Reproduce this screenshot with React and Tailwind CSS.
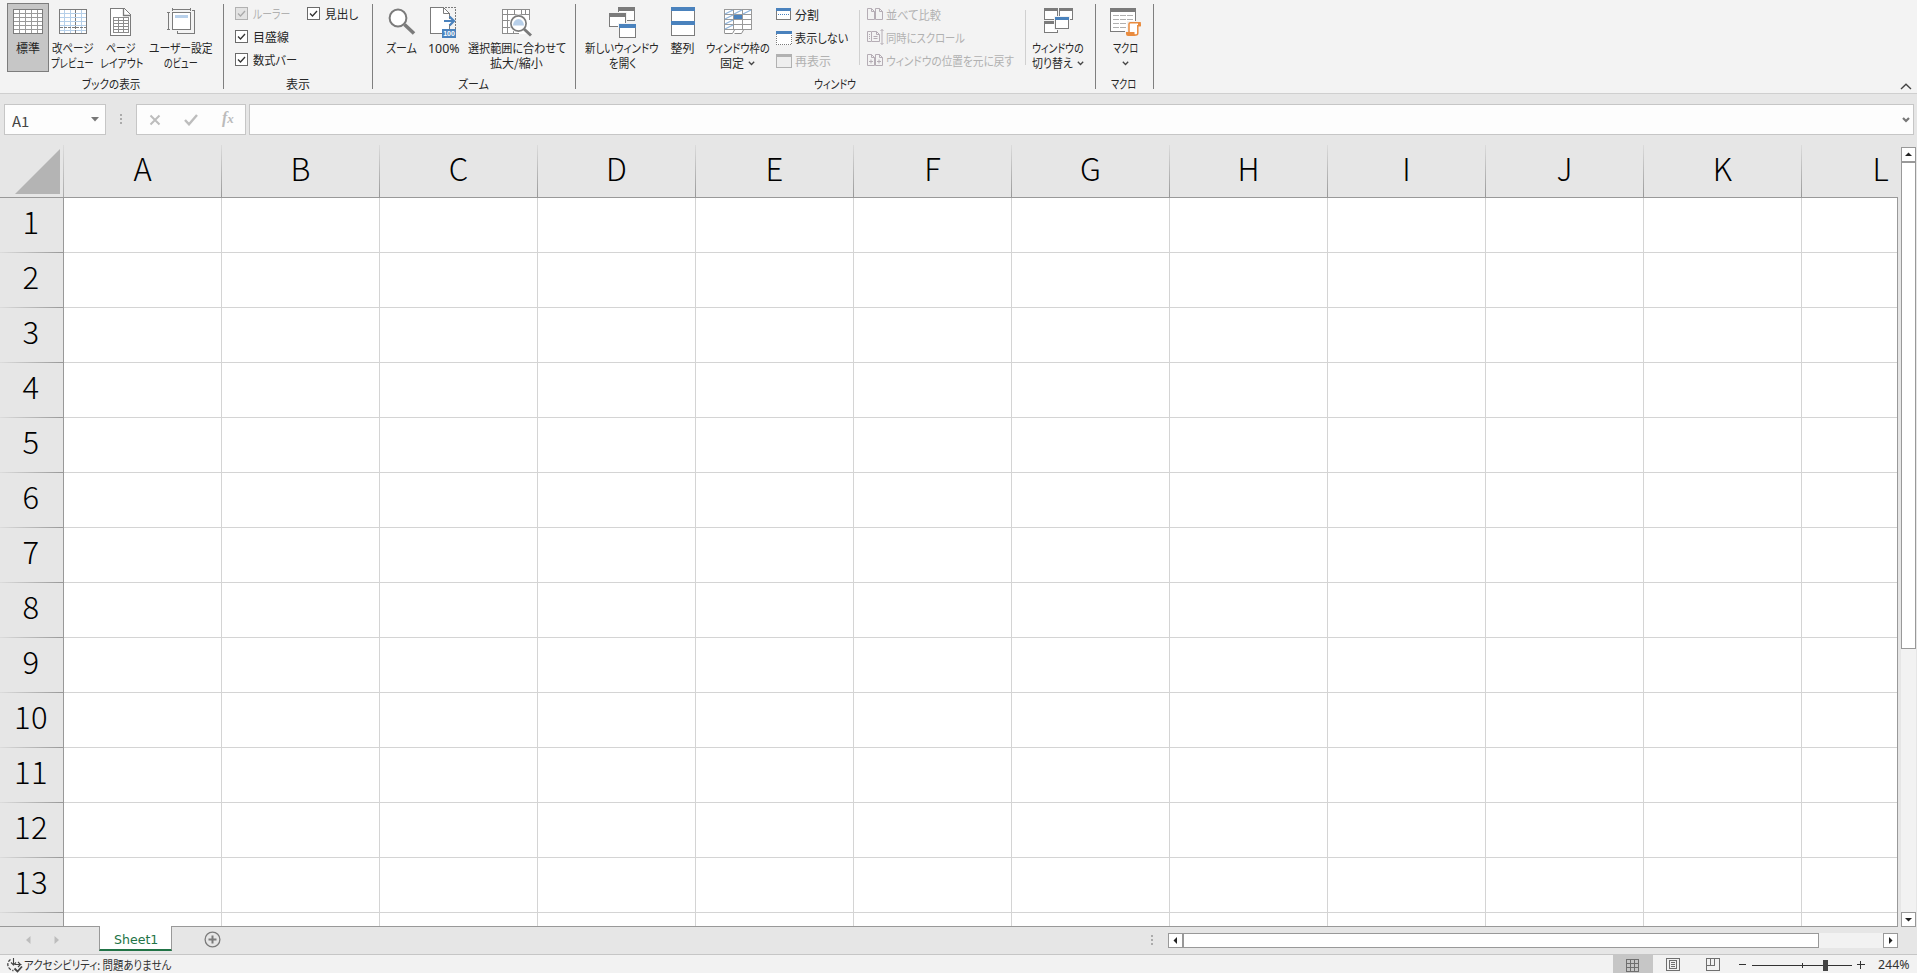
import { useLayoutEffect, useRef, useState } from "react";

/* Text squeezed or stretched horizontally to a given width, like the condensed UI kana. */
function Fit({ w, children, className = "" }) {
  const ref = useRef(null);
  const [scale, setScale] = useState(1);
  useLayoutEffect(() => {
    setScale(w / ref.current.offsetWidth);
  }, [w]);
  return (
    <span className={"block shrink-0 whitespace-nowrap " + className} style={{ width: w }}>
      <span ref={ref} className="inline-block origin-left [font-feature-settings:'palt']" style={{ transform: `scaleX(${scale})` }}>
        {children}
      </span>
    </span>
  );
}

function Svg({ w, h, children, className = "", smooth }) {
  return (
    <svg width={w} height={h} viewBox={`0 0 ${w} ${h}`} fill="none" className={"block shrink-0 " + className} shapeRendering={smooth ? "auto" : "crispEdges"}>
      {children}
    </svg>
  );
}

const G = "#7b7b7b";
const B = "#4a82bd";

const NormalIcon = () => (
  <Svg w={30} h={25}>
    <rect x=".5" y=".5" width="29" height="24" fill="#fff" stroke={G} />
    <path d="M1 4.5h28M1 8.5h28M1 12.5h28M1 16.5h28M1 20.5h28M6.5 1v23M12.5 1v23M18.5 1v23M24.5 1v23" stroke="#9a9a9a" />
  </Svg>
);
const PageBreakIcon = () => (
  <Svg w={28} h={25}>
    <rect x=".5" y=".5" width="27" height="24" fill="#fff" stroke={G} />
    <path d="M1 4.5h26M1 8.5h26M1 12.5h26M1 16.5h26M1 21.5h26M5.5 1v23M11.5 1v23M22.5 1v23" stroke="#b5cfe9" />
    <path d="M16.5 1v23M1 18.5h26" stroke={G} strokeDasharray="3 1" />
  </Svg>
);
const PageLayoutIcon = () => (
  <Svg w={22} h={28}>
    <path d="M.5 .5h14l6 6v21H.5z" fill="#fff" stroke={G} />
    <path d="M13.5 .5v7h7" stroke={G} strokeWidth="1.3" shapeRendering="auto" />
    <path d="M3.5 9.5h15v15h-15zM3.5 12.5h15M3.5 15.5h15M3.5 18.5h15M3.5 21.5h15M8.5 9.5v15M13.5 9.5v15" stroke="#8c8c8c" />
  </Svg>
);
const CustomViewIcon = () => (
  <Svg w={28} h={27}>
    <rect x="5.5" y="4.5" width="18" height="17" fill="#fff" stroke={G} />
    <rect x="8" y="7" width="13" height="3" fill="#b8d0ea" />
    <path d="M5.5 0v3M23.5 0v3M5.500 1.500h18M0 4.500h3M0 21.500h3M1.500 4.500v17M25 2.500h2.500v23h-17V23" stroke={G} />
  </Svg>
);
const ZoomIcon = () => (
  <Svg w={28} h={28} smooth>
    <circle cx="10" cy="10" r="8.400" fill="#fff" stroke={G} strokeWidth="2" />
    <path d="M16.500 16.500L26 25.500" stroke={G} strokeWidth="3.600" />
  </Svg>
);
const Zoom100Icon = () => (
  <Svg w={27} h={32}>
    <path d="M.5 .5h13l6 6v20H.5z" fill="#fff" />
    <path d="M12 26.500H.5V.5h13l6 6v5M19.500 17v5" stroke={G} />
    <path d="M13.500 .5v6h6" stroke={G} shapeRendering="auto" />
    <path d="M15 .5h10.500V22" stroke={G} strokeDasharray="2 1" />
    <path d="M14 14h9.500M19.500 9.500l4.500 4.500-4.500 4.500" stroke={B} strokeWidth="2.200" shapeRendering="auto" />
    <rect x="12" y="22" width="14" height="9" fill={B} />
    <text x="19" y="29.300" textAnchor="middle" fill="#fff" fontSize="7" fontWeight="700" fontFamily="Liberation Sans, sans-serif">100</text>
  </Svg>
);
const ZoomSelIcon = () => (
  <Svg w={30} h={28}>
    <rect x=".5" y=".5" width="27" height="24" fill="#fff" />
    <path d="M.5 24.500V.5h27v10M.5 24.500h16M1 5.500h27M1 11.500h8M1 18.500h8M5.500 1v23M12.500 1v4M19.500 1v4M23.500 1v4M11.500 20v4" stroke="#8c8c8c" />
    <g shapeRendering="auto">
      <circle cx="16.500" cy="14.500" r="9.300" fill="#fff" />
      <circle cx="16.500" cy="14.500" r="7.600" fill="#fff" stroke={G} strokeWidth="1.700" />
      <path d="M11 16.500a5.500 6.500 0 0 1 11 0z" fill="#b8d0ea" />
      <path d="M22 20l7 6.500" stroke={G} strokeWidth="3" />
    </g>
  </Svg>
);
const Win = ({ x, y, w, h, c = G, b = 4, s = G }) => (
  <>
    <rect x={x + 0.5} y={y + 0.5} width={w - 1} height={h - 1} fill="#fff" stroke={s} />
    <rect x={x} y={y} width={w} height={b} fill={c} />
  </>
);
const NewWindowIcon = () => (
  <Svg w={27} h={31}>
    <Win x={9} y={0} w={17} h={14} />
    <rect x="-1" y="5" width="19" height="16" fill="#f3f3f3" />
    <Win x={0} y={6} w={17} h={14} />
    <rect x="9" y="16" width="18" height="15" fill="#f3f3f3" />
    <Win x={10} y={17} w={17} h={14} c={B} />
  </Svg>
);
const ArrangeIcon = () => (
  <Svg w={24} h={29}>
    <Win x={0} y={0} w={24} h={15} c={B} />
    <Win x={0} y={14} w={24} h={15} c={B} />
  </Svg>
);
const FreezeIcon = () => (
  <Svg w={28} h={26}>
    <path d="M.5 .5h27v19h-7l-2 5H.5z" fill="#fff" />
    <path d="M.5 24V.5h27v20M0 5.500h28M0 10.500h28M0 15.500h28M0 20.500h28M9.500 0v21M18.500 0v21" stroke="#999" />
    <rect x="10" y="6" width="8" height="4" fill={B} />
    <path d="M1 5l8-4M10 5l8-4M19 5l8-4M1 10l8-4M1 15l8-4M1 20l8-4" stroke="#8eb4dc" strokeWidth="1.300" shapeRendering="auto" />
    <path d="M.5 24.500h8l2-3.500M10.500 24.500h7l2-3.500" stroke="#8c8c8c" shapeRendering="auto" />
  </Svg>
);
const SplitIcon = () => (
  <Svg w={16} h={14}>
    <Win x={0} y={0} w={15} h={12} c={B} b={3} />
    <path d="M2 6.500h12" stroke={B} strokeDasharray="1 1" />
  </Svg>
);
const HideIcon = () => (
  <Svg w={16} h={14}>
    <rect x="0" y="0" width="16" height="14" fill="#fff" />
    <path d="M.5 3v10.500h15V3" stroke={G} strokeDasharray="1 1" />
    <rect x="0" y="0" width="16" height="3" fill={B} />
  </Svg>
);
const UnhideIcon = () => (
  <Svg w={16} h={14}>
    <rect x=".5" y=".5" width="15" height="13" fill="#eee" stroke="#b1b1b1" />
    <rect x="0" y="0" width="16" height="3" fill="#b1b1b1" />
  </Svg>
);
const PG = "#b5adb5";
const CompareIcon = () => (
  <Svg w={17} h={13} smooth>
    <path d="M.5 .5h4l3 3v8h-7zM4.500 .5v3h3M8.500 .5h4l3 3v8h-7zM12.500 .5v3h3" stroke={PG} />
  </Svg>
);
const SyncIcon = () => (
  <Svg w={17} h={17} smooth>
    <path d="M4 2.500H.5v10H4M4.500 2.500h5l3 3v7h-8zM9.500 2.500v3h3M2 5.500h1M2 7.500h1M2 9.500h1M6.500 7.500h4M6.500 9.500h4M15 .5v15M13.500 2L15 .5 16.500 2M13.500 14l1.500 1.500 1.500-1.500" stroke={PG} />
  </Svg>
);
const ResetPosIcon = () => (
  <Svg w={17} h={13} smooth>
    <path d="M.5 .5h4l3 3v8h-7zM4.500 .5v3h3M8.500 .5h4l3 3v8h-7zM12.500 .5v3h3M2 7.500h4M4 5.500v4M10 7.500h4M12 5.500v4" stroke={PG} />
  </Svg>
);
const SwitchIcon = () => (
  <Svg w={29} h={26}>
    <Win x={0} y={0} w={14} h={12} b={3} />
    <Win x={15} y={0} w={14} h={12} b={3} />
    <Win x={0} y={13} w={14} h={12} b={3} />
    <rect x="10" y="8" width="16" height="14" fill="#f3f3f3" />
    <Win x={11} y={9} w={14} h={12} c={B} b={3} />
  </Svg>
);
const MacroIcon = () => (
  <Svg w={31} h={29}>
    <Win x={0} y={0} w={26} h={24} b={4} />
    <path d="M3 7.500h6M10 7.500h6M17 7.500h6M3 11.500h6M10 11.500h6M17 11.500h6M3 15.500h6M10 15.500h6M3 19.500h6M10 19.500h6" stroke="#b0b0b0" />
    <path d="M17 13h15v10h-2v6H15v-6h2z" fill="#f3f3f3" />
    <g shapeRendering="auto">
      <path d="M19 25V16q0-1.300 1.300-1.300H30v3h-2.200V25q0 2-1.800 2h-7z" fill="#fff" stroke="#e98b3e" strokeWidth="1.500" />
      <path d="M16 24h8.500v1.500q0 2 1.500 2.500h-8Q16 28 16 26z" fill="#e98b3e" />
      <path d="M28 14h1.500q1.500 .5 1.500 4h-3z" fill="#e98b3e" />
    </g>
  </Svg>
);

const Chevron = ({ className = "" }) => (
  <Svg w={7} h={5} smooth className={className}>
    <path d="M.8 .8l2.700 2.700L6.200 .8" stroke="#444" strokeWidth="1.300" />
  </Svg>
);

function BigButton({ w, icon, iconTop, lines, selected, chevron }) {
  return (
    <div className={"flex h-[69px] shrink-0 flex-col items-center " + w + (selected ? " bg-[#c6c6c6] outline outline-1 -outline-offset-1 outline-[#7d7d7d]" : "")}>
      <div className={"flex h-[37px] w-full items-start justify-center " + iconTop}>{icon}</div>
      {lines.map(([text, width], i) => (
        <div key={i} className="flex h-[15px] items-center leading-[15px]">
          <Fit w={width}>{text}</Fit>
          {chevron && i === 1 && <Chevron className="ml-1 mt-px" />}
        </div>
      ))}
      {chevron && lines.length === 1 && <Chevron className="mt-[6px]" />}
    </div>
  );
}

function Group({ w, pl, label, lw, labelPl, children }) {
  return (
    <div className={"flex h-[93px] shrink-0 flex-col pt-[3px] " + w}>
      <div className={"flex h-[72px] " + pl}>{children}</div>
      <div className={"flex h-[17px] items-center leading-[17px] " + labelPl}>
        <Fit w={lw}>{label}</Fit>
      </div>
    </div>
  );
}
const Divider = () => <div className="mt-1 h-[85px] w-px shrink-0 bg-[#7f7f7f]" />;
const LightDivider = () => <div className="mt-[7px] h-[55px] w-px shrink-0 bg-[#d0d0d0]" />;

function Check({ label, w, disabled }) {
  return (
    <div className={"flex h-[23px] items-center gap-[5px] " + (disabled ? "text-[#b1b1b1]" : "")}>
      <Svg w={13} h={13} smooth>
        <rect x=".5" y=".5" width="12" height="12" fill={disabled ? "#e3e3e3" : "#fff"} stroke={disabled ? "#b1b1b1" : "#6a6a6a"} />
        <path d="M3 6.500l2.500 2.500L10 4" stroke={disabled ? "#a9a9a9" : "#333"} strokeWidth="1.300" />
      </Svg>
      <Fit w={w}>{label}</Fit>
    </div>
  );
}

function SmallItem({ icon, label, w, disabled }) {
  return (
    <div className={"flex h-[23px] items-center " + (disabled ? "text-[#b1b1b1]" : "")}>
      <div className="flex w-[19px] items-center">{icon}</div>
      <Fit w={w}>{label}</Fit>
    </div>
  );
}

function Ribbon() {
  return (
    <div className="flex h-[94px] shrink-0 border-b border-[#cfcfcf] bg-[#f3f3f3] text-[12px] text-[#262626]">
      <Group w="w-[223px]" pl="pl-[7px]" label="ブックの表示" lw={58} labelPl="pl-[82px]">
        <BigButton w="w-[42px]" iconTop="pt-[6px]" icon={<NormalIcon />} lines={[["標準", 24]]} selected />
        <BigButton w="w-[47px]" iconTop="pt-[6px]" icon={<PageBreakIcon />} lines={[["改ページ", 42], ["プレビュー", 43]]} />
        <BigButton w="w-[50px]" iconTop="pt-[5px]" icon={<PageLayoutIcon />} lines={[["ページ", 30], ["レイアウト", 43]]} />
        <BigButton w="w-[69px]" iconTop="pt-[5px]" icon={<CustomViewIcon />} lines={[["ユーザー設定", 64], ["のビュー", 34]]} />
      </Group>
      <Divider />
      <Group w="w-[148px]" pl="pl-[11px]" label="表示" lw={24} labelPl="pl-[62px]">
        <div className="w-[72px] -mt-px">
          <Check label="ルーラー" w={37} disabled />
          <Check label="目盛線" w={36} />
          <Check label="数式バー" w={44} />
        </div>
        <div className="-mt-px">
          <Check label="見出し" w={33} />
        </div>
      </Group>
      <Divider />
      <Group w="w-[202px]" pl="pl-[9px]" label="ズーム" lw={31} labelPl="pl-[85px]">
        <BigButton w="w-[39px]" iconTop="pt-[5px]" icon={<ZoomIcon />} lines={[["ズーム", 31]]} />
        <BigButton w="w-[45px]" iconTop="pt-[4px]" icon={<Zoom100Icon />} lines={[[<span key="p" className="font-['Noto_Sans']">100%</span>, 32]]} />
        <BigButton w="w-[101px]" iconTop="pt-[6px]" icon={<ZoomSelIcon />} lines={[["選択範囲に合わせて", 98], ["拡大/縮小", 53]]} />
      </Group>
      <Divider />
      <Group w="w-[519px]" pl="pl-[8px]" label="ウィンドウ" lw={42} labelPl="pl-[238px]">
        <BigButton w="w-[76px]" iconTop="pt-[4px]" icon={<NewWindowIcon />} lines={[["新しいウィンドウ", 74], ["を開く", 27]]} />
        <BigButton w="w-[45px]" iconTop="pt-[4px]" icon={<ArrangeIcon />} lines={[["整列", 24]]} />
        <BigButton w="w-[65px]" iconTop="pt-[6px]" icon={<FreezeIcon />} lines={[["ウィンドウ枠の", 64], ["固定", 24]]} chevron />
        <div className="w-[89px] pl-[6px]">
          <SmallItem icon={<SplitIcon />} label="分割" w={24} />
          <SmallItem icon={<HideIcon />} label="表示しない" w={53} />
          <SmallItem icon={<UnhideIcon />} label="再表示" w={36} disabled />
        </div>
        <LightDivider />
        <div className="w-[165px] pl-[7px]">
          <SmallItem icon={<CompareIcon />} label="並べて比較" w={55} disabled />
          <SmallItem icon={<SyncIcon />} label="同時にスクロール" w={79} disabled />
          <SmallItem icon={<ResetPosIcon />} label="ウィンドウの位置を元に戻す" w={128} disabled />
        </div>
        <LightDivider />
        <BigButton w="w-[64px]" iconTop="pt-[5px]" icon={<SwitchIcon />} lines={[["ウィンドウの", 52], ["切り替え", 41]]} chevron />
      </Group>
      <Divider />
      <Group w="w-[57px]" pl="pl-[5px]" label="マクロ" lw={25} labelPl="pl-[15px]">
        <BigButton w="w-[48px]" iconTop="pt-[5px]" icon={<MacroIcon />} lines={[["マクロ", 25]]} chevron />
      </Group>
      <Divider />
      <div className="flex flex-1 items-end justify-end pr-[5px] pb-[3px]">
        <Svg w={12} h={7} smooth>
          <path d="M1 6l5-4.700L11 6" stroke="#444" strokeWidth="1.400" />
        </Svg>
      </div>
    </div>
  );
}

const Dots = ({ className = "" }) => (
  <Svg w={3} h={12} className={className}>
    <path d="M0 1h2M0 5h2M0 9h2" stroke="#ababab" strokeWidth="2" />
  </Svg>
);

function FormulaBar() {
  return (
    <div className="flex h-[51px] shrink-0 pl-1 pt-[10px]">
      <div className="flex h-[31px] w-[102px] items-center justify-between border border-[#c6c6c6] bg-[#fdfdfd] pl-[7px] pr-[6px] text-[#444]">
        <Fit w={17} className="pt-[3px] text-[14px] leading-5">A1</Fit>
        <Svg w={8} h={5} smooth>
          <path d="M0 0h8L4 4.500z" fill="#777" />
        </Svg>
      </div>
      <Dots className="ml-[14px] mt-[10px]" />
      <div className="ml-[13px] flex h-[31px] w-[110px] items-center border border-[#c6c6c6] bg-[#fdfdfd] pl-[12px] text-[#bbb]">
        <Svg w={12} h={12} smooth>
          <path d="M1.500 1.500l9 9M10.500 1.500l-9 9" stroke="#bdbdbd" strokeWidth="2" />
        </Svg>
        <Svg w={14} h={12} smooth className="ml-[23px]">
          <path d="M1 6l4 4.300L13 1" stroke="#bdbdbd" strokeWidth="2.400" />
        </Svg>
        <span className="ml-[24px] -mt-[3px] font-['Liberation_Serif'] text-[16px] font-bold italic leading-4">
          f<span className="text-[13px]">x</span>
        </span>
      </div>
      <div className="ml-[3px] flex h-[31px] w-[1665px] items-center justify-end border border-[#c6c6c6] bg-[#fdfdfd] pr-[3px]">
        <Svg w={8} h={6} smooth>
          <path d="M1 1l3 3 3-3" stroke="#777" strokeWidth="2.200" />
        </Svg>
      </div>
    </div>
  );
}

const COLS = ["A", "B", "C", "D", "E", "F", "G", "H", "I", "J", "K", "L"];
const ROWS = [1, 2, 3, 4, 5, 6, 7, 8, 9, 10, 11, 12, 13];

function Sheet() {
  return (
    <div className="h-[782px] w-[1898px] shrink-0 overflow-hidden border-b border-[#999]">
      <div className="flex h-[53px] overflow-hidden border-b border-[#999]">
        <div className="flex h-[52px] w-[64px] shrink-0">
          <Svg w={63} h={52} smooth>
            <path d="M60 4v45H15z" fill="#b4b4b4" />
          </Svg>
          <div className="h-[52px] w-px bg-linear-to-b from-[#dcdcdc] to-[#aaa]" />
        </div>
        {COLS.map((c) => (
          <div key={c} className="flex h-[52px] w-[158px] shrink-0">
            <div className="flex w-[157px] items-center justify-center pb-[8px] text-[31px] font-light leading-none text-black">{c}</div>
            <div className="h-[52px] w-px bg-linear-to-b from-[#dcdcdc] to-[#999]" />
          </div>
        ))}
      </div>
      <div className="w-[1898px] border-r border-[#999]">
        {[...ROWS, ""].map((r) => (
          <div key={r} className="flex h-[55px] overflow-hidden">
            <div className="flex w-[64px] shrink-0 flex-col border-r border-[#999]">
              <div className="flex h-[54px] items-center justify-center pb-[9px] pr-px text-[31px] font-light leading-none tracking-[0.5px] text-black">{r}</div>
              <div className="h-px bg-linear-to-r from-[#dcdcdc] to-[#999]" />
            </div>
            {COLS.map((c) => (
              <div key={c} className="w-[158px] shrink-0 border-b border-r border-[#d4d4d4] bg-white" />
            ))}
          </div>
        ))}
      </div>
    </div>
  );
}

function ScrollButton({ d }) {
  return (
    <div className="flex size-[15px] shrink-0 items-center justify-center border border-[#999] bg-white">
      <Svg w={7} h={7} smooth>
        <path d={d} fill="#222" />
      </Svg>
    </div>
  );
}

function VerticalScroll() {
  return (
    <div className="ml-[3px] mt-[2px] flex h-[780px] w-[15px] flex-col bg-[#f2f2f2]">
      <ScrollButton d="M3.500 1.500L7 5H0z" />
      <div className="h-[487px] border border-[#999] bg-white" />
      <div className="flex-1" />
      <ScrollButton d="M3.500 5.500L7 2H0z" />
    </div>
  );
}

function TabBar() {
  return (
    <div className="flex h-[27px] shrink-0">
      <div className="flex w-[99px] items-center pl-[26px] pb-[2px]">
        <Svg w={5} h={8} smooth>
          <path d="M4.500 0v8L0 4z" fill="#bdbdbd" />
        </Svg>
        <Svg w={5} h={8} smooth className="ml-[23px]">
          <path d="M.5 0v8L5 4z" fill="#bdbdbd" />
        </Svg>
      </div>
      <div className="relative -mt-px flex h-[25px] w-[73px] justify-center border-x border-b-2 border-x-[#999] border-b-[#217346] bg-white pt-[5px] font-['DejaVu_Sans'] text-[12px] leading-[18px] text-[#217346]">
        <Fit w={44}>Sheet1</Fit>
      </div>
      <Svg w={17} h={17} smooth className="ml-[32px] mt-[4px]">
        <circle cx="8.500" cy="8.500" r="7.400" stroke="#7b7b7b" strokeWidth="1.300" />
        <path d="M8.500 4.500v8M4.500 8.500h8" stroke="#7b7b7b" strokeWidth="2" />
      </Svg>
      <Dots className="ml-auto mt-[8px]" />
      <div className="ml-[14px] mr-[19px] mt-[6px] flex h-[15px] w-[730px] bg-[#f2f2f2]">
        <ScrollButton d="M5 0v7L1.500 3.500z" />
        <div className="-ml-px w-[637px] border border-l-2 border-[#999] bg-white" />
        <div className="flex-1" />
        <ScrollButton d="M2 0v7l3.500-3.500z" />
      </div>
    </div>
  );
}

function StatusBar() {
  return (
    <div className="flex h-[19px] shrink-0 overflow-hidden border-t border-[#c6c6c6] bg-[#f2f2f2] text-[12px] text-[#333]">
      <Svg w={17} h={15} smooth className="ml-[6px] mt-[3px]">
        <path d="M4.500 1.500A6 6 0 0 0 7.500 12.500" stroke="#444" strokeWidth="1.300" strokeDasharray="3 1.500" />
        <path d="M7.500 0v6.500M5 4.500l2.500 2.500 2.500-2.500M9 6.500h6.500M12 4l2.500 2.500L12 9" stroke="#444" strokeWidth="1.100" />
        <path d="M8.500 10.500l3 3 4.500-5" stroke="#444" strokeWidth="1.800" />
      </Svg>
      <Fit w={147} className="ml-px leading-[20px]">アクセシビリティ: 問題ありません</Fit>
      <div className="flex-1" />
      <div className="flex w-[40px] items-center justify-center bg-[#c6c6c6]">
        <Svg w={13} h={13} className="mr-px mt-[2px]">
          <path d="M.5 .5h12v12H.5zM4.500 0v13M8.500 0v13M0 4.500h13M0 8.500h13" stroke="#6f6f6f" />
        </Svg>
      </div>
      <Svg w={14} h={13} className="ml-[13px] mt-[3px]">
        <path d="M.5 .5h13v12H.5zM3.500 2.500h7v8h-7zM5 4.500h4M5 6.500h4M5 8.500h4" stroke="#6f6f6f" />
      </Svg>
      <Svg w={14} h={13} className="ml-[26px] mt-[3px]">
        <path d="M.5 12.500V.5h13v12H.5M4.500 1v7M8.500 1v7M1 7.500h8" stroke="#6f6f6f" />
      </Svg>
      <Svg w={126} h={18} className="ml-[19px]">
        <path d="M0 9.500h7M13 10.500h100M63.500 8v5M118 9.500h8M121.500 6v8" stroke="#333" />
        <rect x="84" y="5" width="5" height="11" fill="#444" />
      </Svg>
      <Fit w={32} className="ml-[13px] mr-[7px] font-['Noto_Sans'] leading-[19px]">244%</Fit>
    </div>
  );
}

export default function App() {
  return (
    <div className="flex h-[973px] w-[1917px] flex-col overflow-hidden bg-[#e6e6e6] font-['Noto_Sans_CJK_JP',sans-serif]">
      <Ribbon />
      <FormulaBar />
      <div className="flex h-[782px] shrink-0">
        <Sheet />
        <VerticalScroll />
      </div>
      <TabBar />
      <StatusBar />
    </div>
  );
}
